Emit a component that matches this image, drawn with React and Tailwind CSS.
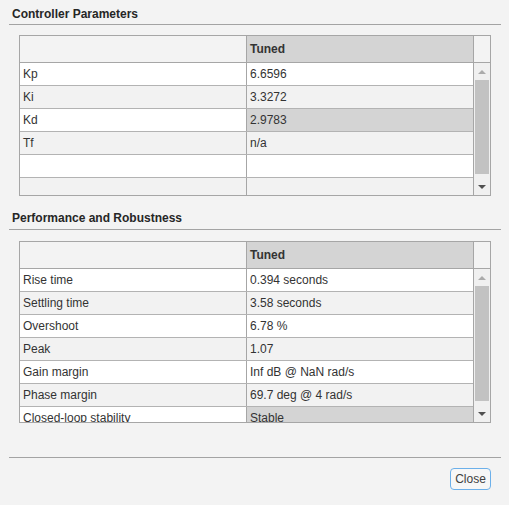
const paramRows = [
    { label: 'Kp', value: '6.6596' },
    { label: 'Ki', value: '3.3272' },
    { label: 'Kd', value: '2.9783', selected: true },
    { label: 'Tf', value: 'n/a' },
    { label: '', value: '' },
    { label: '', value: '' },
];

const perfRows = [
    { label: 'Rise time', value: '0.394 seconds' },
    { label: 'Settling time', value: '3.58 seconds' },
    { label: 'Overshoot', value: '6.78 %' },
    { label: 'Peak', value: '1.07' },
    { label: 'Gain margin', value: 'Inf dB @ NaN rad/s' },
    { label: 'Phase margin', value: '69.7 deg @ 4 rad/s' },
    { label: 'Closed-loop stability', value: 'Stable', selected: true },
];

const SectionTitle = ({ children, top, bottom }) => (
    <div>
        <div className={`pl-[12px] leading-[14px] font-bold text-[#262626] ${top} ${bottom}`}>{children}</div>
        <div className="ml-[9px] w-[492px] h-px bg-[#a3a3a3]" />
    </div>
);

const DataTable = ({ rows, height }) => (
    <div className={`ml-[19px] w-[472px] ${height} flex border border-[#a6a6a6] overflow-hidden`}>
        <div className="flex-1 flex flex-col overflow-hidden">
            <div className="flex h-[27px] shrink-0 border-b border-[#a6a6a6]">
                <div className="w-[227px] bg-[#f3f3f3] border-r border-[#a6a6a6]" />
                <div className="flex-1 bg-[#d4d4d4] pl-[3px] leading-[26px] font-bold text-[#333]">Tuned</div>
            </div>
            {rows.map((row, i) => (
                <div key={i} className={`flex h-[23px] shrink-0 border-b border-[#b3b3b3] ${i % 2 === 0 ? 'bg-white' : 'bg-[#f2f2f2]'}`}>
                    <div className="w-[227px] pl-[3px] leading-[22px] border-r border-[#a6a6a6] whitespace-nowrap text-[#333]">{row.label}</div>
                    <div className={`flex-1 pl-[3px] leading-[22px] whitespace-nowrap text-[#333] ${row.selected ? 'bg-[#d4d4d4]' : ''}`}>{row.value}</div>
                </div>
            ))}
        </div>
        <div className="w-[17px] flex flex-col border-l border-[#a6a6a6]">
            <div className="h-[27px] shrink-0 border-b border-[#a6a6a6] bg-[#f3f3f3]" />
            <div className="flex-1 flex flex-col bg-[#f0f0f0]">
                <div className="h-[17px] flex items-center justify-center">
                    <div className="w-0 h-0 border-x-[4px] border-x-transparent border-b-[4px] border-b-[#ababab]" />
                </div>
                <div className="flex-1 mx-px mb-[4px] bg-[#c2c2c2]" />
                <div className="h-[17px] flex items-center justify-center">
                    <div className="w-0 h-0 border-x-[4px] border-x-transparent border-t-[4px] border-t-[#505050]" />
                </div>
            </div>
        </div>
    </div>
);

const App = () => {
    return (
        <div className="w-[509px] h-[505px] bg-[#f3f3f3] text-[12px] overflow-hidden flex flex-col" style={{ fontFamily: '"Liberation Sans", Arial, sans-serif' }}>
            <SectionTitle top="pt-[7px]" bottom="pb-[3px]">Controller Parameters</SectionTitle>
            <div className="mt-[10px]">
                <DataTable rows={paramRows} height="h-[161px]" />
            </div>
            <div className="mt-[15px]">
                <SectionTitle top="" bottom="pb-[4px]">Performance and Robustness</SectionTitle>
            </div>
            <div className="mt-[11px]">
                <DataTable rows={perfRows} height="h-[182px]" />
            </div>
            <div className="mt-[34px] ml-[9px] w-[492px] h-px bg-[#a3a3a3]" />
            <div className="mt-[10px] flex justify-end pr-[18px]">
                <button className="w-[41px] h-[22px] rounded-[4px] border border-[#6cb0ea] bg-[#f7f7f7] text-[#404040] leading-[20px] text-[12px]">Close</button>
            </div>
        </div>
    );
};

export default App;
